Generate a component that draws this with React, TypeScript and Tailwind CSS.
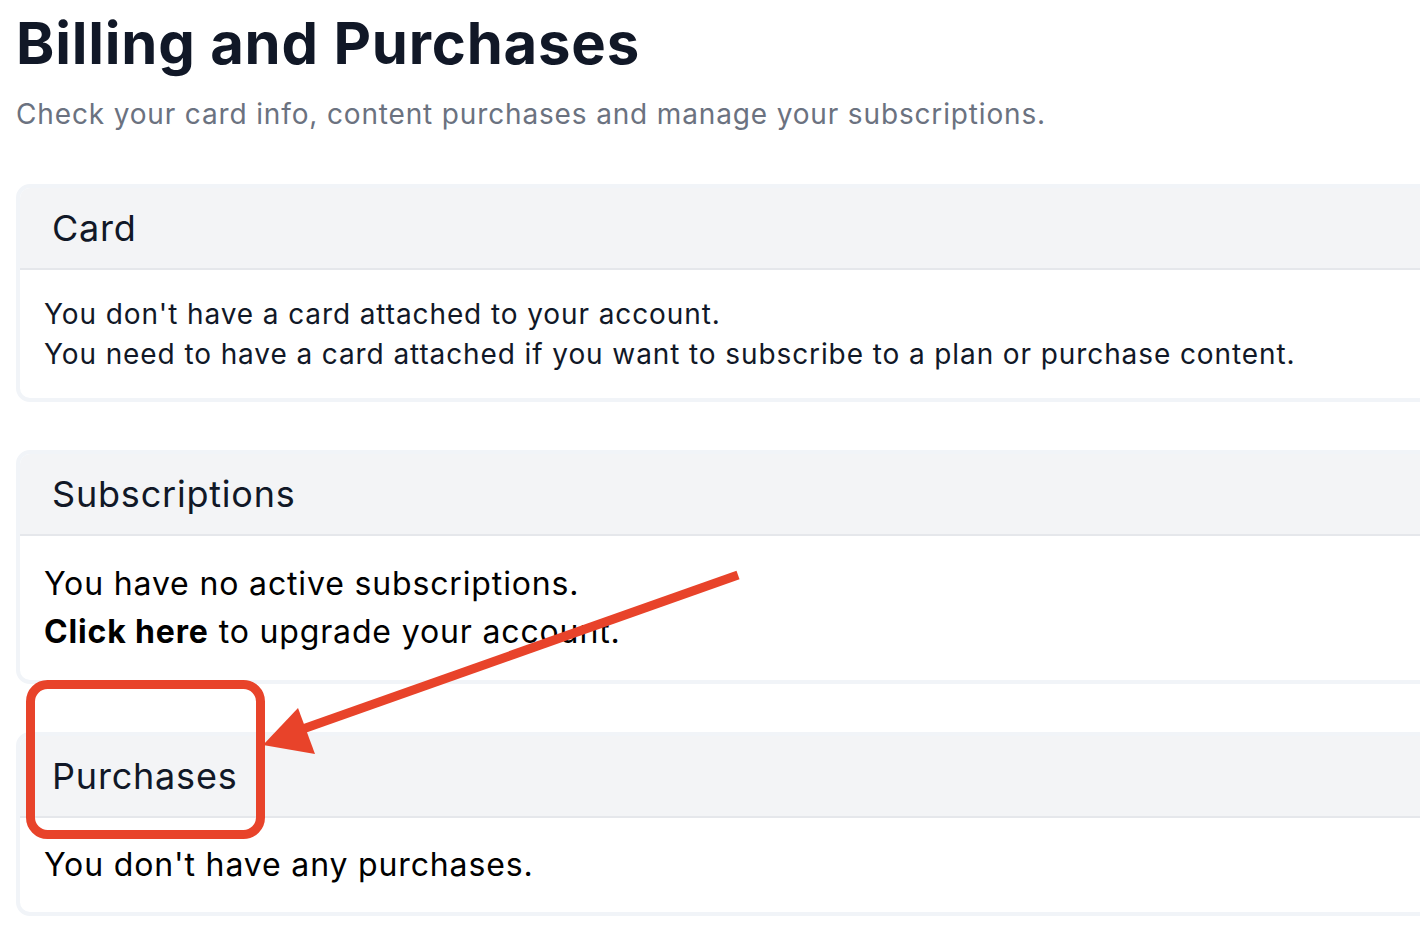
import React from "react";

function Card({ title, children, bodyClass }: { title: string; children: React.ReactNode; bodyClass: string }) {
  return (
    <section className="w-[1460px] rounded-[14px] border-4 border-[#f1f4f8] bg-white overflow-hidden">
      <div className="h-[82px] flex items-center pl-8 bg-[#f3f4f6] border-b-2 border-[#e5e7eb]">
        <h2 className="text-[36px] leading-[48px] tracking-[0.8px] text-[#111827]">{title}</h2>
      </div>
      <div className={bodyClass}>{children}</div>
    </section>
  );
}

export default function App() {
  return (
    <div className="relative w-full h-[926px] overflow-hidden bg-white font-['Inter',sans-serif]">
      <div className="pl-4 pt-[7px] flex flex-col">
        <h1 className="text-[58px] leading-[72px] font-bold tracking-[0.8px] text-[#111827]">Billing and Purchases</h1>
        <p className="mt-[15px] text-[28px] leading-[40px] tracking-[0.85px] text-[#6b7280]">
          Check your card info, content purchases and manage your subscriptions.
        </p>
        <div className="mt-[50px] flex flex-col gap-12">
          <Card title="Card" bodyClass="pl-6 py-6 text-[28px] leading-[40px] tracking-[0.9px] text-[#111827]">
            <p>You don't have a card attached to your account.</p>
            <p>You need to have a card attached if you want to subscribe to a plan or purchase content.</p>
          </Card>
          <Card title="Subscriptions" bodyClass="pl-6 py-6 text-[32px] leading-[48px] tracking-[0.85px] text-black">
            <p>You have no active subscriptions.</p>
            <p>
              <span className="font-bold">Click here</span> to upgrade your account.
            </p>
          </Card>
          <Card title="Purchases" bodyClass="pl-6 py-[23px] text-[32px] leading-[48px] tracking-[0.85px] text-black">
            <p>You don't have any purchases.</p>
          </Card>
        </div>
      </div>
      <svg className="absolute left-0 top-0 pointer-events-none" width="1420" height="926" viewBox="0 0 1420 926">
        <rect x="30.5" y="684.5" width="230" height="150" rx="17" fill="none" stroke="#e8432a" strokeWidth="9" />
        <line x1="738" y1="575" x2="300" y2="730" stroke="#e8432a" strokeWidth="9" />
        <polygon points="263,745 298,708 315,754" fill="#e8432a" />
      </svg>
    </div>
  );
}
